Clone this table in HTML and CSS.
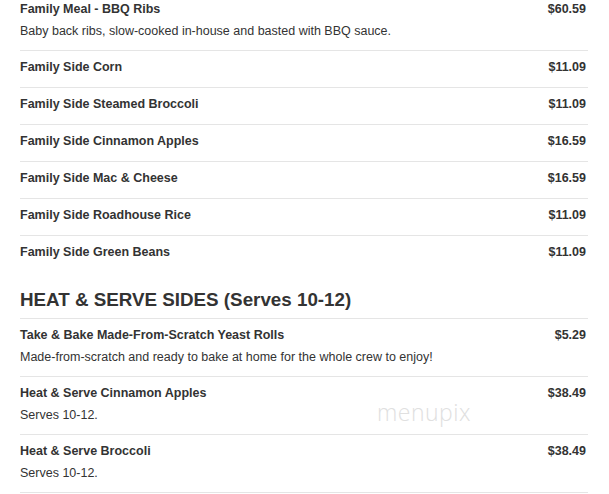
FILE: index.html
```html
<!DOCTYPE html>
<html>
<head>
<meta charset="utf-8">
<link rel="stylesheet" href="styles.css">
</head>
<body>
<div class="menu">
  <div class="item desc-item">
    <div class="row"><span class="name">Family Meal - BBQ Ribs</span><span class="price">$60.59</span></div>
    <div class="desc">Baby back ribs, slow-cooked in-house and basted with BBQ sauce.</div>
  </div>
  <div class="item"><div class="row"><span class="name">Family Side Corn</span><span class="price">$11.09</span></div></div>
  <div class="item"><div class="row"><span class="name">Family Side Steamed Broccoli</span><span class="price">$11.09</span></div></div>
  <div class="item"><div class="row"><span class="name">Family Side Cinnamon Apples</span><span class="price">$16.59</span></div></div>
  <div class="item"><div class="row"><span class="name">Family Side Mac &amp; Cheese</span><span class="price">$16.59</span></div></div>
  <div class="item"><div class="row"><span class="name">Family Side Roadhouse Rice</span><span class="price">$11.09</span></div></div>
  <div class="item last"><div class="row"><span class="name">Family Side Green Beans</span><span class="price">$11.09</span></div></div>

  <h2 class="section">HEAT &amp; SERVE SIDES (Serves 10-12)</h2>

  <div class="item desc-item">
    <div class="row"><span class="name">Take &amp; Bake Made-From-Scratch Yeast Rolls</span><span class="price">$5.29</span></div>
    <div class="desc">Made-from-scratch and ready to bake at home for the whole crew to enjoy!</div>
  </div>
  <div class="item desc-item">
    <div class="row"><span class="name">Heat &amp; Serve Cinnamon Apples</span><span class="price">$38.49</span></div>
    <div class="desc">Serves 10-12.</div>
  </div>
  <div class="item desc-item">
    <div class="row"><span class="name">Heat &amp; Serve Broccoli</span><span class="price">$38.49</span></div>
    <div class="desc">Serves 10-12.</div>
  </div>
</div>
<div class="watermark">menupix</div>
</body>
</html>
```
FILE: styles.css
```css
html, body {
  margin: 0;
  padding: 0;
  background: #fff;
}
body {
  font-family: "Liberation Sans", Arial, sans-serif;
  color: #333;
  position: relative;
  height: 494px;
  overflow: hidden;
}
.menu {
  margin: -7px 0 0 20px;
  width: 568px;
}
.item {
  border-bottom: 1px solid #e5e5e5;
  padding: 7px 0 11px;
}
.item.desc-item {
  padding-bottom: 10px;
}
.item.last {
  border-bottom: none;
}
.row {
  display: flex;
  justify-content: space-between;
  align-items: baseline;
  padding-right: 2px;
}
.name, .price {
  font-size: 12.5px;
  font-weight: bold;
  line-height: 18px;
}
.desc {
  margin-top: 4px;
  font-size: 12.5px;
  line-height: 18px;
}
.section {
  margin: 16px 0 0;
  padding-bottom: 6px;
  font-size: 18.8px;
  line-height: 24px;
  font-weight: bold;
  border-bottom: 1px solid #e5e5e5;
}
.watermark {
  position: absolute;
  left: 377px;
  top: 396px;
  font-family: "Open Sans", sans-serif;
  font-weight: 300;
  font-size: 23px;
  letter-spacing: 0.5px;
  color: #e0e0e0;
}
```
